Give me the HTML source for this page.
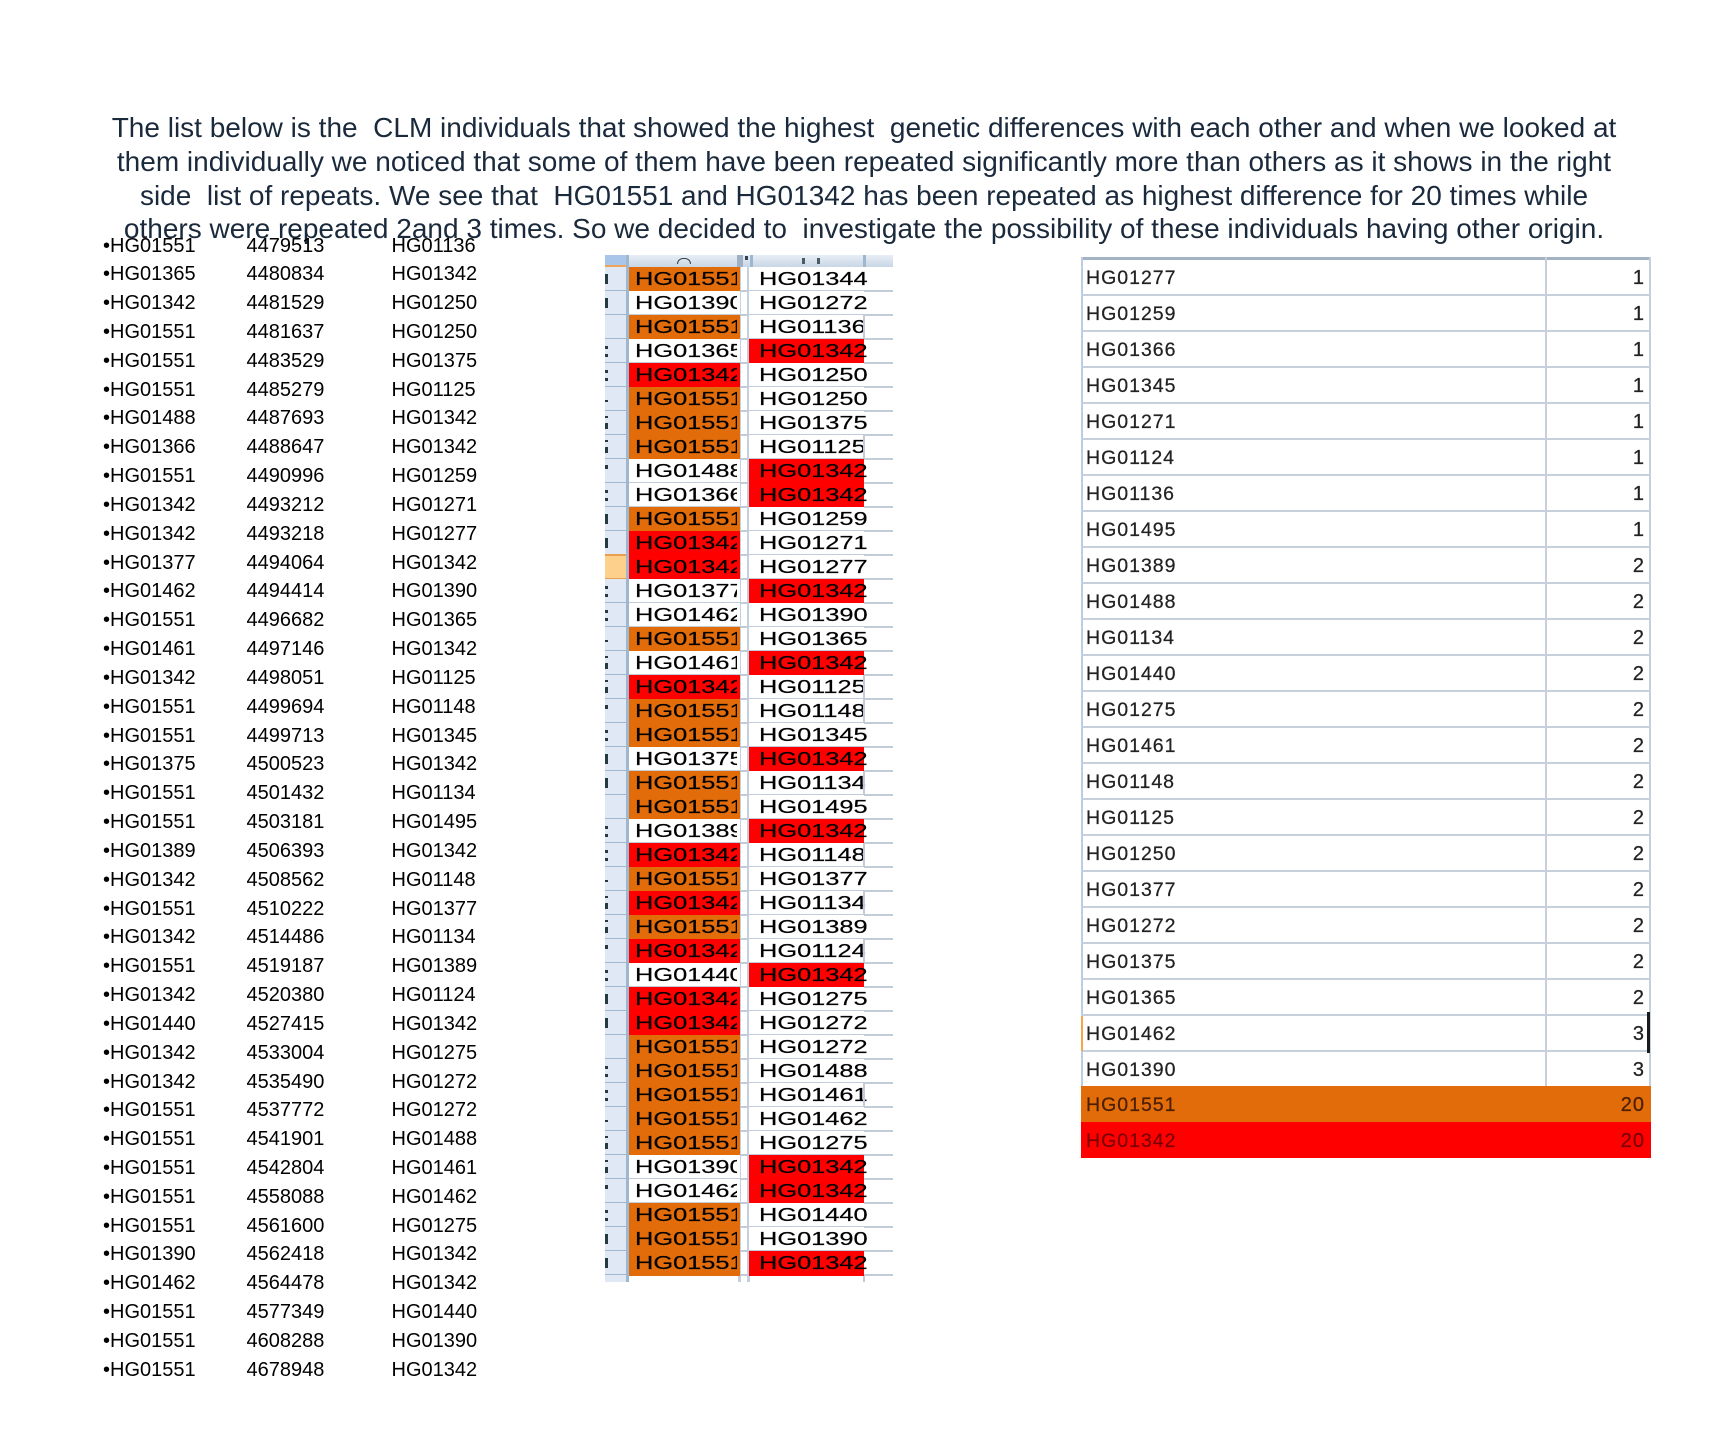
<!DOCTYPE html>
<html><head><meta charset="utf-8"><title>CLM individuals</title>
<style>
html,body{margin:0;padding:0;background:#fff}
#p{position:relative;width:1728px;height:1440px;overflow:hidden;background:#fff;font-family:"Liberation Sans",sans-serif}
.h{position:absolute;left:0;width:1728px;text-align:center;white-space:pre;font-size:28px;height:34px;line-height:34px;color:#1a2a3c}
#l{position:absolute;left:0;top:231.5px;color:#000;font-size:20px}
#l div{position:relative;height:28.83px;line-height:28.83px;white-space:pre}
#l span{position:absolute;top:0}
#l .a{left:103px}#l .b{left:246.5px}#l .c{left:391.5px}
#m{position:absolute;left:605px;top:255px;width:288px;height:1027px;overflow:hidden}
#mh{position:absolute;left:0;top:0;width:288px;height:12px;background:linear-gradient(#e8eef6,#c8d6e6)}
#mh i{position:absolute;display:block}
.r{position:absolute;left:0;width:288px;height:24px}
.r:before{content:"";position:absolute;left:0;right:0;top:23px;height:2px;background:#c2ccd9}
.g{position:absolute;left:0;top:0;width:21px;height:24px;background:#dfe8f4}
.g:after{content:"";position:absolute;left:0;width:21px;top:23px;height:2px;background:#9fb6cf}
.g i{position:absolute;left:0;width:3px;background:#263a42}
.m1 i{top:7px;height:10px}
.m2 i{top:7px;height:3px;box-shadow:0 8px 0 #263a42}
.m3 i{top:13px;height:2px}
.m4 i{top:5px;height:13px;background:linear-gradient(#263a42 0,#263a42 2px,transparent 2px,transparent 7px,#263a42 7px)}
.m5 i{top:6px;height:4px}
.s{background:#fdd08c}.s:after{background:#e8a050}.s:before{content:"";position:absolute;left:0;width:21px;top:-1px;height:2px;background:#e8a050}
.ca,.cb{position:absolute;top:0;height:24px;background:#fff}
.ca{left:24px;width:111px}
.cb{left:144px;width:115px}
.o{background:#e26b0a}.x{background:#f00;background:#ff0000}
.ca,.cb{z-index:1}
.ca.w,.cb.w{height:23px}
.ca.o,.cb.o,.ca.x,.cb.x{height:25px}
.t{position:absolute;top:0;height:24px;line-height:24px;overflow:hidden;z-index:2;font-size:18px;color:#000;-webkit-text-stroke:.2px #000}
.t span{display:inline-block;transform:scaleX(1.41);transform-origin:0 50%;white-space:pre}
.ta{left:30px;width:102px}.tb{left:154px;width:112px}
.vv{position:absolute;top:0;width:3px;background:#c5d0df}
.v:after{content:"";position:absolute;left:258px;top:0;width:2px;height:23px;background:#c2ccd9;z-index:3}
#rt{position:absolute;left:1081px;top:257px;width:570px;height:901px;overflow:hidden;background:#fff}
.q{position:absolute;left:0;width:570px;height:36px;font-size:19.5px;line-height:39px;color:#222;letter-spacing:1px;-webkit-text-stroke:.25px #222}
.q:after{content:"";position:absolute;left:0;right:0;top:35px;height:2px;background:#c5d0dc}
.q b{position:absolute;left:5px;font-weight:normal}
.q u{position:absolute;right:6px;text-decoration:none;font-size:20px}
.q.o2{background:#e26b0a;color:#4a2000;-webkit-text-stroke:.25px #4a2000}.q.x2{background:#ff0000;color:#7a0000;-webkit-text-stroke:.25px #7a0000}
.q.o2:after,.q.x2:after{display:none}
</style></head><body><div id="p">
<div class="h" style="top:111px">The list below is the  CLM individuals that showed the highest  genetic differences with each other and when we looked at</div>
<div class="h" style="top:145px">them individually we noticed that some of them have been repeated significantly more than others as it shows in the right</div>
<div class="h" style="top:179px">side  list of repeats. We see that  HG01551 and HG01342 has been repeated as highest difference for 20 times while</div>
<div class="h" style="top:212px">others were repeated 2and 3 times. So we decided to  investigate the possibility of these individuals having other origin.</div>

<div id="l">
<div><span class="a">•HG01551</span><span class="b">4479513</span><span class="c">HG01136</span></div>
<div><span class="a">•HG01365</span><span class="b">4480834</span><span class="c">HG01342</span></div>
<div><span class="a">•HG01342</span><span class="b">4481529</span><span class="c">HG01250</span></div>
<div><span class="a">•HG01551</span><span class="b">4481637</span><span class="c">HG01250</span></div>
<div><span class="a">•HG01551</span><span class="b">4483529</span><span class="c">HG01375</span></div>
<div><span class="a">•HG01551</span><span class="b">4485279</span><span class="c">HG01125</span></div>
<div><span class="a">•HG01488</span><span class="b">4487693</span><span class="c">HG01342</span></div>
<div><span class="a">•HG01366</span><span class="b">4488647</span><span class="c">HG01342</span></div>
<div><span class="a">•HG01551</span><span class="b">4490996</span><span class="c">HG01259</span></div>
<div><span class="a">•HG01342</span><span class="b">4493212</span><span class="c">HG01271</span></div>
<div><span class="a">•HG01342</span><span class="b">4493218</span><span class="c">HG01277</span></div>
<div><span class="a">•HG01377</span><span class="b">4494064</span><span class="c">HG01342</span></div>
<div><span class="a">•HG01462</span><span class="b">4494414</span><span class="c">HG01390</span></div>
<div><span class="a">•HG01551</span><span class="b">4496682</span><span class="c">HG01365</span></div>
<div><span class="a">•HG01461</span><span class="b">4497146</span><span class="c">HG01342</span></div>
<div><span class="a">•HG01342</span><span class="b">4498051</span><span class="c">HG01125</span></div>
<div><span class="a">•HG01551</span><span class="b">4499694</span><span class="c">HG01148</span></div>
<div><span class="a">•HG01551</span><span class="b">4499713</span><span class="c">HG01345</span></div>
<div><span class="a">•HG01375</span><span class="b">4500523</span><span class="c">HG01342</span></div>
<div><span class="a">•HG01551</span><span class="b">4501432</span><span class="c">HG01134</span></div>
<div><span class="a">•HG01551</span><span class="b">4503181</span><span class="c">HG01495</span></div>
<div><span class="a">•HG01389</span><span class="b">4506393</span><span class="c">HG01342</span></div>
<div><span class="a">•HG01342</span><span class="b">4508562</span><span class="c">HG01148</span></div>
<div><span class="a">•HG01551</span><span class="b">4510222</span><span class="c">HG01377</span></div>
<div><span class="a">•HG01342</span><span class="b">4514486</span><span class="c">HG01134</span></div>
<div><span class="a">•HG01551</span><span class="b">4519187</span><span class="c">HG01389</span></div>
<div><span class="a">•HG01342</span><span class="b">4520380</span><span class="c">HG01124</span></div>
<div><span class="a">•HG01440</span><span class="b">4527415</span><span class="c">HG01342</span></div>
<div><span class="a">•HG01342</span><span class="b">4533004</span><span class="c">HG01275</span></div>
<div><span class="a">•HG01342</span><span class="b">4535490</span><span class="c">HG01272</span></div>
<div><span class="a">•HG01551</span><span class="b">4537772</span><span class="c">HG01272</span></div>
<div><span class="a">•HG01551</span><span class="b">4541901</span><span class="c">HG01488</span></div>
<div><span class="a">•HG01551</span><span class="b">4542804</span><span class="c">HG01461</span></div>
<div><span class="a">•HG01551</span><span class="b">4558088</span><span class="c">HG01462</span></div>
<div><span class="a">•HG01551</span><span class="b">4561600</span><span class="c">HG01275</span></div>
<div><span class="a">•HG01390</span><span class="b">4562418</span><span class="c">HG01342</span></div>
<div><span class="a">•HG01462</span><span class="b">4564478</span><span class="c">HG01342</span></div>
<div><span class="a">•HG01551</span><span class="b">4577349</span><span class="c">HG01440</span></div>
<div><span class="a">•HG01551</span><span class="b">4608288</span><span class="c">HG01390</span></div>
<div><span class="a">•HG01551</span><span class="b">4678948</span><span class="c">HG01342</span></div>
</div>

<div id="m">
<div id="mh">
<i style="left:0;top:0;width:21px;height:10px;background:#a9c6ea"></i>
<i style="left:0;top:10px;width:21px;height:2px;background:#eda55c"></i>
<i style="left:21px;top:0;width:3px;height:12px;background:#9fb6cf"></i>
<i style="left:72px;top:3px;width:14px;height:6px;border:1.5px solid #33424c;border-bottom:0;border-radius:7px 7px 0 0;box-sizing:border-box"></i>
<i style="left:132px;top:0;width:6px;height:12px;background:#9db0c4"></i>
<i style="left:140px;top:1px;width:3px;height:4px;background:#33424c"></i>
<i style="left:145px;top:0;width:3px;height:12px;background:#9fb6cf"></i>
<i style="left:197px;top:3px;width:3px;height:6px;background:#4a5a66"></i>
<i style="left:212px;top:3px;width:3px;height:6px;background:#4a5a66"></i>
<i style="left:258px;top:0;width:3px;height:12px;background:#9fb6cf"></i>
</div>
<div class="vv" style="left:133px;top:12px;height:1015px;z-index:0"></div>
<div class="vv" style="left:142px;top:12px;height:1015px;z-index:0"></div>
<div class="r" style="top:12px"><div class="g m1"><i></i></div><div class="ca o"></div><div class="t ta"><span>HG01551</span></div><div class="cb w"></div><div class="t tb"><span>HG01344</span></div></div>
<div class="r" style="top:36px"><div class="g m1"><i></i></div><div class="ca w"></div><div class="t ta"><span>HG01390</span></div><div class="cb w"></div><div class="t tb"><span>HG01272</span></div></div>
<div class="r v" style="top:60px"><div class="g"></div><div class="ca o"></div><div class="t ta"><span>HG01551</span></div><div class="cb w"></div><div class="t tb"><span>HG01136</span></div></div>
<div class="r" style="top:84px"><div class="g m2"><i></i></div><div class="ca w"></div><div class="t ta"><span>HG01365</span></div><div class="cb x"></div><div class="t tb"><span>HG01342</span></div></div>
<div class="r" style="top:108px"><div class="g m2"><i></i></div><div class="ca x"></div><div class="t ta"><span>HG01342</span></div><div class="cb w"></div><div class="t tb"><span>HG01250</span></div></div>
<div class="r" style="top:132px"><div class="g m3"><i></i></div><div class="ca o"></div><div class="t ta"><span>HG01551</span></div><div class="cb w"></div><div class="t tb"><span>HG01250</span></div></div>
<div class="r" style="top:156px"><div class="g m4"><i></i></div><div class="ca o"></div><div class="t ta"><span>HG01551</span></div><div class="cb w"></div><div class="t tb"><span>HG01375</span></div></div>
<div class="r v" style="top:180px"><div class="g m4"><i></i></div><div class="ca o"></div><div class="t ta"><span>HG01551</span></div><div class="cb w"></div><div class="t tb"><span>HG01125</span></div></div>
<div class="r" style="top:204px"><div class="g m5"><i></i></div><div class="ca w"></div><div class="t ta"><span>HG01488</span></div><div class="cb x"></div><div class="t tb"><span>HG01342</span></div></div>
<div class="r" style="top:228px"><div class="g m2"><i></i></div><div class="ca w"></div><div class="t ta"><span>HG01366</span></div><div class="cb x"></div><div class="t tb"><span>HG01342</span></div></div>
<div class="r" style="top:252px"><div class="g m1"><i></i></div><div class="ca o"></div><div class="t ta"><span>HG01551</span></div><div class="cb w"></div><div class="t tb"><span>HG01259</span></div></div>
<div class="r" style="top:276px"><div class="g m1"><i></i></div><div class="ca x"></div><div class="t ta"><span>HG01342</span></div><div class="cb w"></div><div class="t tb"><span>HG01271</span></div></div>
<div class="r" style="top:300px"><div class="g s"></div><div class="ca x"></div><div class="t ta"><span>HG01342</span></div><div class="cb w"></div><div class="t tb"><span>HG01277</span></div></div>
<div class="r" style="top:324px"><div class="g m2"><i></i></div><div class="ca w"></div><div class="t ta"><span>HG01377</span></div><div class="cb x"></div><div class="t tb"><span>HG01342</span></div></div>
<div class="r" style="top:348px"><div class="g m2"><i></i></div><div class="ca w"></div><div class="t ta"><span>HG01462</span></div><div class="cb w"></div><div class="t tb"><span>HG01390</span></div></div>
<div class="r" style="top:372px"><div class="g m3"><i></i></div><div class="ca o"></div><div class="t ta"><span>HG01551</span></div><div class="cb w"></div><div class="t tb"><span>HG01365</span></div></div>
<div class="r" style="top:396px"><div class="g m4"><i></i></div><div class="ca w"></div><div class="t ta"><span>HG01461</span></div><div class="cb x"></div><div class="t tb"><span>HG01342</span></div></div>
<div class="r v" style="top:420px"><div class="g m4"><i></i></div><div class="ca x"></div><div class="t ta"><span>HG01342</span></div><div class="cb w"></div><div class="t tb"><span>HG01125</span></div></div>
<div class="r v" style="top:444px"><div class="g m5"><i></i></div><div class="ca o"></div><div class="t ta"><span>HG01551</span></div><div class="cb w"></div><div class="t tb"><span>HG01148</span></div></div>
<div class="r" style="top:468px"><div class="g m2"><i></i></div><div class="ca o"></div><div class="t ta"><span>HG01551</span></div><div class="cb w"></div><div class="t tb"><span>HG01345</span></div></div>
<div class="r" style="top:492px"><div class="g m1"><i></i></div><div class="ca w"></div><div class="t ta"><span>HG01375</span></div><div class="cb x"></div><div class="t tb"><span>HG01342</span></div></div>
<div class="r v" style="top:516px"><div class="g m1"><i></i></div><div class="ca o"></div><div class="t ta"><span>HG01551</span></div><div class="cb w"></div><div class="t tb"><span>HG01134</span></div></div>
<div class="r" style="top:540px"><div class="g"></div><div class="ca o"></div><div class="t ta"><span>HG01551</span></div><div class="cb w"></div><div class="t tb"><span>HG01495</span></div></div>
<div class="r" style="top:564px"><div class="g m2"><i></i></div><div class="ca w"></div><div class="t ta"><span>HG01389</span></div><div class="cb x"></div><div class="t tb"><span>HG01342</span></div></div>
<div class="r v" style="top:588px"><div class="g m2"><i></i></div><div class="ca x"></div><div class="t ta"><span>HG01342</span></div><div class="cb w"></div><div class="t tb"><span>HG01148</span></div></div>
<div class="r" style="top:612px"><div class="g m3"><i></i></div><div class="ca o"></div><div class="t ta"><span>HG01551</span></div><div class="cb w"></div><div class="t tb"><span>HG01377</span></div></div>
<div class="r v" style="top:636px"><div class="g m4"><i></i></div><div class="ca x"></div><div class="t ta"><span>HG01342</span></div><div class="cb w"></div><div class="t tb"><span>HG01134</span></div></div>
<div class="r" style="top:660px"><div class="g m4"><i></i></div><div class="ca o"></div><div class="t ta"><span>HG01551</span></div><div class="cb w"></div><div class="t tb"><span>HG01389</span></div></div>
<div class="r v" style="top:684px"><div class="g m5"><i></i></div><div class="ca x"></div><div class="t ta"><span>HG01342</span></div><div class="cb w"></div><div class="t tb"><span>HG01124</span></div></div>
<div class="r" style="top:708px"><div class="g m2"><i></i></div><div class="ca w"></div><div class="t ta"><span>HG01440</span></div><div class="cb x"></div><div class="t tb"><span>HG01342</span></div></div>
<div class="r" style="top:732px"><div class="g m1"><i></i></div><div class="ca x"></div><div class="t ta"><span>HG01342</span></div><div class="cb w"></div><div class="t tb"><span>HG01275</span></div></div>
<div class="r" style="top:756px"><div class="g m1"><i></i></div><div class="ca x"></div><div class="t ta"><span>HG01342</span></div><div class="cb w"></div><div class="t tb"><span>HG01272</span></div></div>
<div class="r" style="top:780px"><div class="g"></div><div class="ca o"></div><div class="t ta"><span>HG01551</span></div><div class="cb w"></div><div class="t tb"><span>HG01272</span></div></div>
<div class="r" style="top:804px"><div class="g m2"><i></i></div><div class="ca o"></div><div class="t ta"><span>HG01551</span></div><div class="cb w"></div><div class="t tb"><span>HG01488</span></div></div>
<div class="r v" style="top:828px"><div class="g m2"><i></i></div><div class="ca o"></div><div class="t ta"><span>HG01551</span></div><div class="cb w"></div><div class="t tb"><span>HG01461</span></div></div>
<div class="r" style="top:852px"><div class="g m3"><i></i></div><div class="ca o"></div><div class="t ta"><span>HG01551</span></div><div class="cb w"></div><div class="t tb"><span>HG01462</span></div></div>
<div class="r" style="top:876px"><div class="g m4"><i></i></div><div class="ca o"></div><div class="t ta"><span>HG01551</span></div><div class="cb w"></div><div class="t tb"><span>HG01275</span></div></div>
<div class="r" style="top:900px"><div class="g m4"><i></i></div><div class="ca w"></div><div class="t ta"><span>HG01390</span></div><div class="cb x"></div><div class="t tb"><span>HG01342</span></div></div>
<div class="r" style="top:924px"><div class="g m5"><i></i></div><div class="ca w"></div><div class="t ta"><span>HG01462</span></div><div class="cb x"></div><div class="t tb"><span>HG01342</span></div></div>
<div class="r" style="top:948px"><div class="g m2"><i></i></div><div class="ca o"></div><div class="t ta"><span>HG01551</span></div><div class="cb w"></div><div class="t tb"><span>HG01440</span></div></div>
<div class="r" style="top:972px"><div class="g m1"><i></i></div><div class="ca o"></div><div class="t ta"><span>HG01551</span></div><div class="cb w"></div><div class="t tb"><span>HG01390</span></div></div>
<div class="r" style="top:996px"><div class="g m1"><i></i></div><div class="ca o"></div><div class="t ta"><span>HG01551</span></div><div class="cb x"></div><div class="t tb"><span>HG01342</span></div></div>
<div style="position:absolute;left:0;top:1020px;width:21px;height:7px;background:#dfe8f4"></div>
<div style="position:absolute;left:21px;top:12px;width:3px;height:1015px;background:#9fb6cf"></div>
<div style="position:absolute;left:258px;top:1020px;width:2px;height:7px;background:#c2ccd9"></div>
</div>

<div id="rt">
<div class="q" style="top:2px"><b>HG01277</b><u>1</u></div>
<div class="q" style="top:38px"><b>HG01259</b><u>1</u></div>
<div class="q" style="top:74px"><b>HG01366</b><u>1</u></div>
<div class="q" style="top:110px"><b>HG01345</b><u>1</u></div>
<div class="q" style="top:146px"><b>HG01271</b><u>1</u></div>
<div class="q" style="top:182px"><b>HG01124</b><u>1</u></div>
<div class="q" style="top:218px"><b>HG01136</b><u>1</u></div>
<div class="q" style="top:254px"><b>HG01495</b><u>1</u></div>
<div class="q" style="top:290px"><b>HG01389</b><u>2</u></div>
<div class="q" style="top:326px"><b>HG01488</b><u>2</u></div>
<div class="q" style="top:362px"><b>HG01134</b><u>2</u></div>
<div class="q" style="top:398px"><b>HG01440</b><u>2</u></div>
<div class="q" style="top:434px"><b>HG01275</b><u>2</u></div>
<div class="q" style="top:470px"><b>HG01461</b><u>2</u></div>
<div class="q" style="top:506px"><b>HG01148</b><u>2</u></div>
<div class="q" style="top:542px"><b>HG01125</b><u>2</u></div>
<div class="q" style="top:578px"><b>HG01250</b><u>2</u></div>
<div class="q" style="top:614px"><b>HG01377</b><u>2</u></div>
<div class="q" style="top:650px"><b>HG01272</b><u>2</u></div>
<div class="q" style="top:686px"><b>HG01375</b><u>2</u></div>
<div class="q" style="top:722px"><b>HG01365</b><u>2</u></div>
<div class="q" style="top:758px"><b>HG01462</b><u>3</u></div>
<div class="q" style="top:794px"><b>HG01390</b><u>3</u></div>
<div style="position:absolute;left:0;top:0;width:570px;height:3px;background:#a3b3c4"></div>
<div style="position:absolute;left:0;top:0;width:2px;height:901px;background:#bccde2"></div>
<div style="position:absolute;left:464px;top:0;width:2px;height:829px;background:#c5d0dc"></div>
<div style="position:absolute;left:568px;top:0;width:2px;height:829px;background:#c5d0dc"></div>
<div style="position:absolute;left:0;top:759px;width:2px;height:35px;background:#f3a54a"></div>
<div style="position:absolute;left:566px;top:755px;width:3px;height:41px;background:#1a1a1a"></div>
<div class="q o2" style="top:829px"><b>HG01551</b><u>20</u></div>
<div class="q x2" style="top:865px"><b>HG01342</b><u>20</u></div>
</div>
</div></body></html>
